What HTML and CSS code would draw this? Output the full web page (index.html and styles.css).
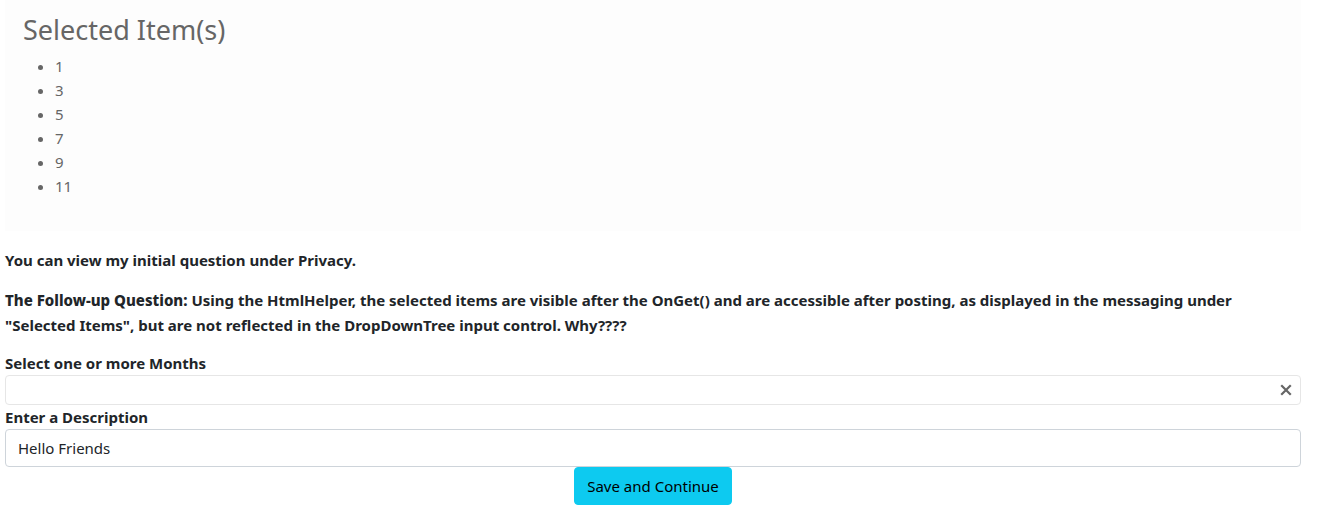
FILE: index.html
```html
<!DOCTYPE html>
<html>
<head>
<meta charset="utf-8">
<link rel="stylesheet" href="styles.css">
</head>
<body>
<div class="page">
  <div class="panel">
    <h2 class="panel-title">Selected Item(s)</h2>
    <ul class="items">
      <li>1</li>
      <li>3</li>
      <li>5</li>
      <li>7</li>
      <li>9</li>
      <li>11</li>
    </ul>
  </div>
  <p class="note">You can view my initial question under Privacy.</p>
  <p class="note question"><strong class="strong">The Follow-up Question:</strong> Using the HtmlHelper, the selected items are visible after the OnGet() and are accessible after posting, as displayed in the messaging under "Selected Items", but are not reflected in the DropDownTree input control. Why????</p>
  <form class="form">
    <label class="label">Select one or more Months</label>
    <div class="tree-input">
      <span class="clear">
        <svg width="12" height="12" viewBox="0 0 12 12"><path d="M2 2 L10 10 M10 2 L2 10" stroke="#666" stroke-width="2.2" stroke-linecap="square"/></svg>
      </span>
    </div>
    <label class="label">Enter a Description</label>
    <div class="text-input">Hello Friends</div>
    <div class="actions">
      <button type="button" class="btn-info">Save and Continue</button>
    </div>
  </form>
</div>
</body>
</html>
```
FILE: styles.css
```css
html, body {
  margin: 0;
  padding: 0;
  background: #fff;
}
body {
  font-family: "Noto Sans", "Open Sans", sans-serif;
  color: #212529;
}
.page {
  margin: 0 18px 0 5px;
}
.panel {
  background: #fdfdfd;
  height: 231px;
  box-sizing: border-box;
  padding: 12px 18px 0;
}
.panel-title {
  margin: 0 0 6px;
  font-size: 27px;
  line-height: 36px;
  font-weight: 400;
  color: #666;
}
.items {
  margin: 0;
  padding-left: 32px;
  color: #666;
  font-size: 15px;
  line-height: 24px;
}
.items li::marker {
  color: #666;
}
.note {
  margin: 17px 0 0;
  font-size: 15px;
  line-height: 25px;
  font-weight: 700;
  color: #212529;
}
.question {
  margin-top: 15px;
}
.question .strong {
  font-weight: 800;
}
.form {
  margin-top: 15px;
  display: flex;
  flex-direction: column;
}
.label {
  font-size: 15px;
  font-weight: 700;
  line-height: 20px;
}
.tree-input {
  height: 30px;
  box-sizing: border-box;
  border: 1px solid #e6e6e6;
  border-radius: 4px;
  display: flex;
  align-items: center;
  justify-content: flex-end;
  padding-right: 8px;
  margin-top: 2px;
  margin-bottom: 2px;
}
.clear {
  display: flex;
}
.text-input {
  height: 38px;
  box-sizing: border-box;
  border: 1px solid #ced4da;
  border-radius: 4px;
  padding: 0 12px;
  display: flex;
  align-items: center;
  font-size: 15px;
  color: #212529;
  margin-top: 2px;
}
.actions {
  display: flex;
  justify-content: center;
}
.btn-info {
  background: #0dcaf0;
  border: 1px solid #0dcaf0;
  border-radius: 4px;
  height: 38px;
  padding: 0 12px;
  font-family: inherit;
  font-size: 15px;
  color: #000;
}
```
